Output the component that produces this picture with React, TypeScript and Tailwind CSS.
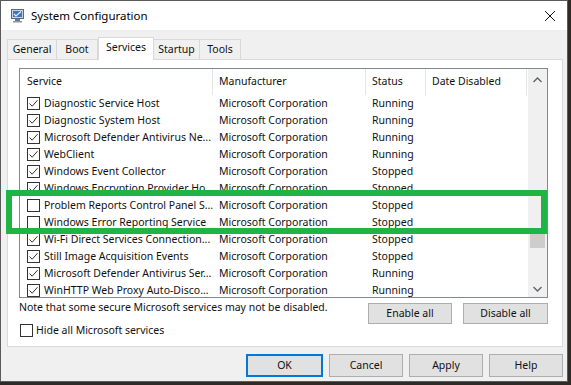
import React from "react";

type Row = { name: string; status: string; checked: boolean };

const rows: Row[] = [
  { name: "Diagnostic Service Host", status: "Running", checked: true },
  { name: "Diagnostic System Host", status: "Running", checked: true },
  { name: "Microsoft Defender Antivirus Ne...", status: "Running", checked: true },
  { name: "WebClient", status: "Running", checked: true },
  { name: "Windows Event Collector", status: "Stopped", checked: true },
  { name: "Windows Encryption Provider Ho...", status: "Stopped", checked: true },
  { name: "Problem Reports Control Panel S...", status: "Stopped", checked: false },
  { name: "Windows Error Reporting Service", status: "Stopped", checked: false },
  { name: "Wi-Fi Direct Services Connection...", status: "Stopped", checked: true },
  { name: "Still Image Acquisition Events", status: "Stopped", checked: true },
  { name: "Microsoft Defender Antivirus Ser...", status: "Running", checked: true },
  { name: "WinHTTP Web Proxy Auto-Disco...", status: "Running", checked: true },
];

function CheckBox({ checked }: { checked: boolean }) {
  return (
    <div className="w-[13px] h-[13px] border border-[#333] bg-white flex items-center justify-center shrink-0">
      {checked && (
        <svg width="11" height="11" viewBox="0 0 11 11">
          <path d="M1.5 5.5 L4.2 8.2 L9.5 2.2" fill="none" stroke="#333" strokeWidth="1" />
        </svg>
      )}
    </div>
  );
}

function Btn({ label, primary, w = "w-[75px]", h = "h-[23px]" }: { label: string; primary?: boolean; w?: string; h?: string }) {
  return (
    <div
      className={`${w} ${h} flex items-center justify-center bg-[#e1e1e1] text-[#111] ${
        primary ? "border-2 border-[#0078d7]" : "border border-[#adadad]"
      }`}
    >
      {label}
    </div>
  );
}

function AppIcon() {
  return (
    <svg width="16" height="16" viewBox="0 0 16 16">
      <rect x="1.5" y="1.5" width="12" height="9" fill="#c9d3df" stroke="#5a6a7e" />
      <rect x="3" y="3" width="9" height="6" fill="#3f76c4" />
      <path d="M4 6 L6 8 L11 3.5" fill="none" stroke="#e8eef7" strokeWidth="1.2" />
      <rect x="5" y="11" width="5" height="2" fill="#6d7a8a" />
      <rect x="3" y="13" width="9" height="1.5" fill="#8b97a5" />
    </svg>
  );
}

export default function App() {
  return (
    <div
      className="w-[571px] h-[385px] bg-[#2f2a26] relative overflow-hidden text-[10.5px] text-[#111]"
      style={{ fontFamily: '"Noto Sans", "Segoe UI", sans-serif' }}
    >
      <div className="w-[568px] h-[382px] border border-[#5b5b5b] bg-[#f0f0f0] flex flex-col">
        {/* title bar */}
        <div className="h-[29px] bg-white flex items-center pl-[9px] pr-[8px] shrink-0">
          <AppIcon />
          <span className="ml-[5px] text-[11.5px] text-black">System Configuration</span>
          <div className="flex-1" />
          <svg width="12" height="12" viewBox="0 0 12 12" className="mr-[3px]">
            <path d="M1 1 L11 11 M11 1 L1 11" stroke="#111" strokeWidth="1" />
          </svg>
        </div>

        {/* tabs */}
        <div className="pl-[6px] pt-[7px] flex items-end h-[30px] shrink-0 relative z-10">
          <div className="w-[50px] h-[20px] mb-[1px] border border-[#d9d9d9] border-b-0 bg-[#f0f0f0] flex items-center justify-center">General</div>
          <div className="w-[41px] h-[20px] mb-[1px] border border-[#d9d9d9] border-b-0 border-l-0 bg-[#f0f0f0] flex items-center justify-center">Boot</div>
          <div className="w-[56px] h-[23px] border border-[#d9d9d9] border-b-0 bg-white flex items-center justify-center pb-[2px]">Services</div>
          <div className="w-[46px] h-[20px] mb-[1px] border border-[#d9d9d9] border-b-0 border-l-0 bg-[#f0f0f0] flex items-center justify-center">Startup</div>
          <div className="w-[41px] h-[20px] mb-[1px] border border-[#d9d9d9] border-b-0 border-l-0 bg-[#f0f0f0] flex items-center justify-center">Tools</div>
        </div>

        {/* panel */}
        <div className="ml-[6px] mt-[-1px] w-[556px] h-[288px] border border-[#d9d9d9] bg-white pl-[11px] pt-[8px] flex flex-col shrink-0">
          {/* list */}
          <div className="w-[529px] h-[230px] border border-[#828790] flex overflow-hidden">
            <div className="flex-1 flex flex-col overflow-hidden">
              <div className="h-[26px] flex shrink-0">
                <div className="w-[193px] pl-[7px] flex items-center border-r border-[#e5e5e5]">Service</div>
                <div className="w-[153px] pl-[6px] flex items-center border-r border-[#e5e5e5]">Manufacturer</div>
                <div className="w-[60px] pl-[6px] flex items-center border-r border-[#e5e5e5]">Status</div>
                <div className="w-[101px] pl-[6px] flex items-center border-r border-[#e5e5e5]">Date Disabled</div>
              </div>
              {rows.map((r) => (
                <div key={r.name} className="h-[17px] flex shrink-0">
                  <div className="w-[193px] pl-[7px] flex items-center gap-[4px] whitespace-nowrap overflow-hidden">
                    <CheckBox checked={r.checked} />
                    <span>{r.name}</span>
                  </div>
                  <div className="w-[153px] pl-[6px] flex items-center whitespace-nowrap">Microsoft Corporation</div>
                  <div className="w-[60px] pl-[6px] flex items-center">{r.status}</div>
                </div>
              ))}
            </div>
            {/* scrollbar */}
            <div className="w-[19px] bg-[#f0f0f0] flex flex-col items-center shrink-0">
              <div className="h-[17px] w-full flex items-center justify-center mt-[2px]">
                <svg width="9" height="6" viewBox="0 0 9 6">
                  <path d="M0.5 5 L4.5 1 L8.5 5" fill="none" stroke="#606060" strokeWidth="1.3" />
                </svg>
              </div>
              <div className="flex-1 w-full px-[2px] flex flex-col">
                <div className="h-[144px]" />
                <div className="h-[16px] bg-[#cdcdcd]" />
              </div>
              <div className="h-[17px] w-full flex items-center justify-center">
                <svg width="9" height="6" viewBox="0 0 9 6">
                  <path d="M0.5 1 L4.5 5 L8.5 1" fill="none" stroke="#606060" strokeWidth="1.3" />
                </svg>
              </div>
            </div>
          </div>

          <div className="flex items-start mt-[5px] pr-[14px]">
            <div className="flex-1 mt-[-3px]">Note that some secure Microsoft services may not be disabled.</div>
            <div className="flex gap-[11px]">
              <Btn label="Enable all" w="w-[84px]" h="h-[21px]" />
              <Btn label="Disable all" w="w-[85px]" h="h-[21px]" />
            </div>
          </div>

          <div className="flex items-center gap-[3px] mt-[-1px] pl-[1px]">
            <CheckBox checked={false} />
            <span>Hide all Microsoft services</span>
          </div>
        </div>

        {/* bottom buttons */}
        <div className="flex justify-end gap-[6px] pr-[4px] mt-[7px]">
          <Btn label="OK" primary w="w-[77px]" />
          <Btn label="Cancel" w="w-[74px]" />
          <Btn label="Apply" w="w-[74px]" />
          <Btn label="Help" w="w-[74px]" />
        </div>
      </div>

      {/* green highlight */}
      <div className="absolute left-[6px] top-[190px] w-[541px] h-[44px] border-[6px] border-[#1fb546] pointer-events-none" />
    </div>
  );
}
